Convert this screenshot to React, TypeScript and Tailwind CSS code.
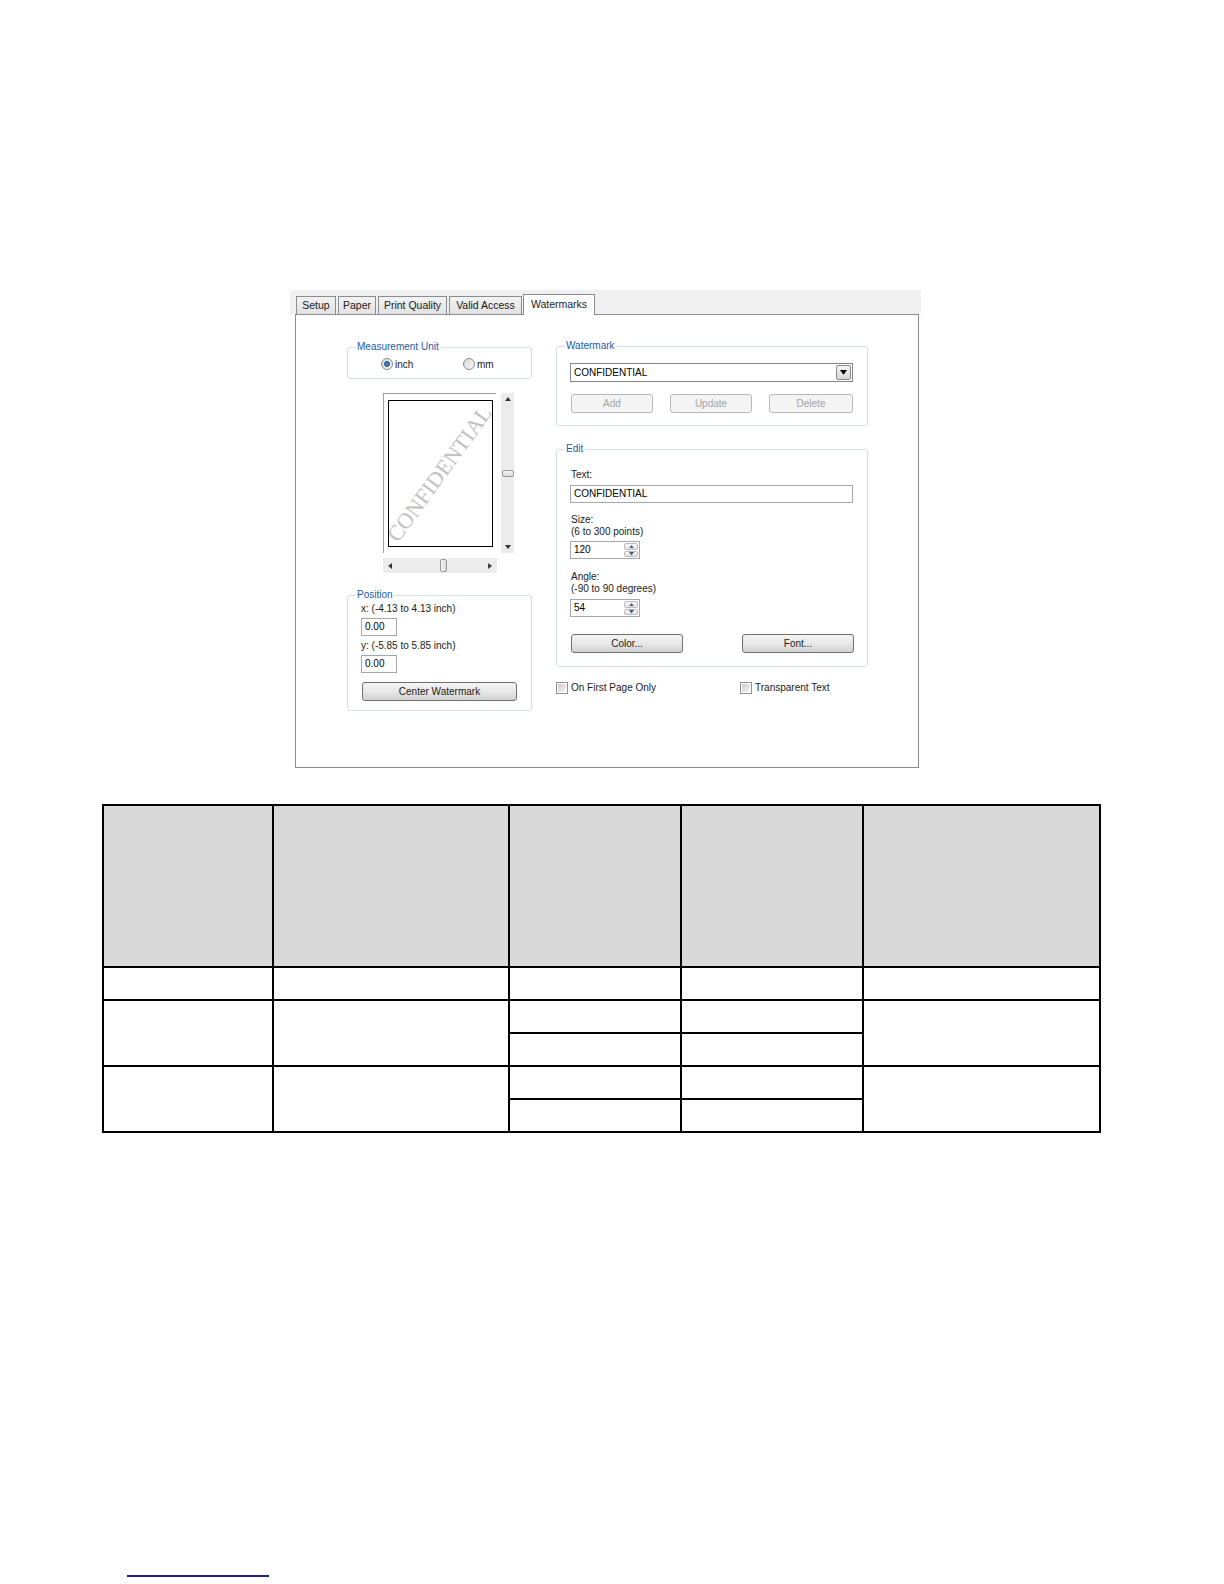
import React from "react";

const ui = "font-['Liberation_Sans',Arial,sans-serif]";

function Group({ title, className, children }: { title: string; className?: string; children?: React.ReactNode }) {
  return (
    <div className={`relative rounded-[3px] border border-[#d5dfe5] ${className ?? ""}`}>
      <span className="absolute -top-[7px] left-[7px] bg-white px-[2px] text-[10px] leading-[12px] text-[#1e5aa8]">{title}</span>
      {children}
    </div>
  );
}

function Btn({ label, disabled, className }: { label: string; disabled?: boolean; className?: string }) {
  return (
    <div
      className={`flex h-[19px] items-center justify-center rounded-[3px] border text-[10px] ${
        disabled
          ? "border-[#b5b9bc] bg-[#f4f4f4] text-[#a3a3a3]"
          : "border-[#707070] bg-linear-to-b from-[#f4f4f4] via-[#e8e8e8] to-[#d2d2d2] text-[#1a1a1a]"
      } ${className ?? ""}`}
    >
      {label}
    </div>
  );
}

function Field({ value, className }: { value: string; className?: string }) {
  return (
    <div className={`flex h-[18px] items-center border border-[#a4a8ae] bg-white pl-[3px] text-[10px] text-black ${className ?? ""}`}>
      {value}
    </div>
  );
}

function Tri({ dir, size = 5, color = "#222" }: { dir: "up" | "down" | "left" | "right"; size?: number; color?: string }) {
  const pts = {
    up: "0,4 3,0 6,4",
    down: "0,0 6,0 3,4",
    left: "4,0 4,6 0,3",
    right: "0,0 0,6 4,3",
  }[dir];
  const vb = dir === "up" || dir === "down" ? "0 0 6 4" : "0 0 4 6";
  const w = dir === "up" || dir === "down" ? size : size * 0.7;
  const h = dir === "up" || dir === "down" ? size * 0.7 : size;
  return (
    <svg width={w} height={h} viewBox={vb}>
      <polygon points={pts} fill={color} />
    </svg>
  );
}

function Spin({ value }: { value: string }) {
  return (
    <div className="flex h-[18px] w-[70px] border border-[#a4a8ae] bg-white">
      <div className="flex-1 pl-[3px] text-[10px] leading-[16px] text-black">{value}</div>
      <div className="flex w-[16px] flex-col gap-px p-px">
        <div className="flex flex-1 items-center justify-center rounded-[2px] border border-[#bcbcbc] bg-linear-to-b from-[#f7f7f7] to-[#e2e2e2]">
          <Tri dir="up" size={5} color="#4a5a70" />
        </div>
        <div className="flex flex-1 items-center justify-center rounded-[2px] border border-[#bcbcbc] bg-linear-to-b from-[#f7f7f7] to-[#e2e2e2]">
          <Tri dir="down" size={5} color="#4a5a70" />
        </div>
      </div>
    </div>
  );
}

function Radio({ checked }: { checked?: boolean }) {
  return (
    <span className="flex h-[12px] w-[12px] items-center justify-center rounded-full border border-[#8a8a8a] bg-linear-to-br from-[#d8d8d8] to-[#fbfbfb]">
      {checked && <span className="h-[6px] w-[6px] rounded-full border border-[#1c4a6e] bg-[#3f86c0]" />}
    </span>
  );
}

function Check() {
  return (
    <span className="flex h-[12px] w-[12px] items-center justify-center border border-[#8f8f8f] bg-white">
      <span className="h-[8px] w-[8px] bg-linear-to-br from-[#cfcfcf] to-[#f4f4f4]" />
    </span>
  );
}

const tabs = [
  { label: "Setup", w: "w-[40px]" },
  { label: "Paper", w: "w-[38px]" },
  { label: "Print Quality", w: "w-[69px]" },
  { label: "Valid Access", w: "w-[73px]" },
];

function Dialog() {
  return (
    <div className={`ml-[290px] mt-[290px] w-[631px] ${ui}`}>
      <div className="flex h-[24px] items-end gap-[2px] bg-[#f0f0f0] pl-[6px]">
        {tabs.map((t) => (
          <div
            key={t.label}
            className={`flex h-[18px] items-center justify-center border border-b-0 border-[#898c95] bg-linear-to-b from-[#f3f3f3] to-[#e2e2e2] text-[10.5px] text-[#1a1a1a] ${t.w}`}
          >
            {t.label}
          </div>
        ))}
        <div className="relative z-10 -mb-px -ml-px flex h-[21px] w-[72px] items-start justify-center border border-b-0 border-[#898c95] bg-white pt-[2px] text-[10.5px] text-[#1a1a1a]">
          Watermarks
        </div>
      </div>
      <div className="ml-[5px] flex h-[454px] w-[624px] gap-[24px] border border-[#898c95] bg-white pl-[51px] pt-[31px]">
        {/* left column */}
        <div className="mt-px flex w-[185px] flex-col">
          <Group title="Measurement Unit" className="h-[32px]">
            <div className="flex h-full items-center pl-[33px] pt-[2px] text-[10px] text-[#1a1a1a]">
              <div className="flex w-[82px] items-center gap-[2px]">
                <Radio checked />
                <span>inch</span>
              </div>
              <div className="flex items-center gap-[2px]">
                <Radio />
                <span>mm</span>
              </div>
            </div>
          </Group>

          <div className="ml-[36px] mt-[14px] flex flex-col">
            <div className="flex gap-[5px]">
              <div className="relative h-[160px] w-[113px] overflow-hidden border-l border-t border-[#a0a0a0] bg-white">
                <div className="ml-[4px] mt-[6px] h-[147px] w-[105px] border-[1.5px] border-black" />
                <div className="absolute inset-0 flex items-center justify-center">
                  <span className="-rotate-[54deg] whitespace-nowrap font-['Liberation_Serif',serif] text-[22px] leading-none text-[#c2c2c2]">
                    CONFIDENTIAL
                  </span>
                </div>
              </div>
              <div className="flex h-[160px] w-[13px] flex-col items-center justify-between bg-[#ececec] py-[4px]">
                <Tri dir="up" size={6} color="#333" />
                <div className="h-[7px] w-[12px] rounded-[2px] border border-[#9a9a9a] bg-linear-to-b from-[#f6f6f6] to-[#dcdcdc]" />
                <Tri dir="down" size={6} color="#333" />
              </div>
            </div>
            <div className="mt-[5px] flex h-[15px] w-[114px] items-center bg-[#ececec] px-[5px]">
              <Tri dir="left" size={6} color="#333" />
              <div className="flex flex-1 justify-center pl-[6px]">
                <div className="h-[13px] w-[7px] rounded-[2px] border border-[#9a9a9a] bg-linear-to-r from-[#f6f6f6] to-[#dcdcdc]" />
              </div>
              <Tri dir="right" size={6} color="#333" />
            </div>
          </div>

          <Group title="Position" className="mt-[22px] h-[116px]">
            <div className="flex flex-col pl-[13px] pt-[7px] text-[10px] leading-[12px] text-[#1a1a1a]">
              <span>x: (-4.13 to 4.13 inch)</span>
              <Field value="0.00" className="mt-[3px] w-[36px]" />
              <span className="mt-[4px]">y: (-5.85 to 5.85 inch)</span>
              <Field value="0.00" className="mt-[3px] w-[36px]" />
              <Btn label="Center Watermark" className="ml-px mt-[9px] w-[155px]" />
            </div>
          </Group>
        </div>

        {/* right column */}
        <div className="flex w-[312px] flex-col">
          <Group title="Watermark" className="h-[80px]">
            <div className="flex flex-col pl-[13px] pt-[16px]">
              <div className="flex h-[19px] w-[283px] items-center justify-between border border-[#7f848b] bg-white pl-[3px] pr-px text-[10px] text-black">
                <span>CONFIDENTIAL</span>
                <div className="flex h-[15px] w-[15px] items-center justify-center rounded-[2px] border border-[#8a8a8a] bg-linear-to-b from-[#f4f4f4] to-[#d6d6d6]">
                  <Tri dir="down" size={7} color="#000" />
                </div>
              </div>
              <div className="ml-px mt-[12px] flex gap-[17px]">
                <Btn label="Add" disabled className="w-[82px]" />
                <Btn label="Update" disabled className="w-[82px]" />
                <Btn label="Delete" disabled className="w-[84px]" />
              </div>
            </div>
          </Group>

          <Group title="Edit" className="mt-[23px] h-[218px]">
            <div className="flex flex-col pl-[13px] pt-[19px] text-[10px] leading-[12px] text-[#1a1a1a]">
              <span className="pl-px">Text:</span>
              <Field value="CONFIDENTIAL" className="mt-[4px] w-[283px]" />
              <span className="mt-[11px] pl-px">Size:</span>
              <span className="pl-px">(6 to 300 points)</span>
              <div className="mt-[3px]">
                <Spin value="120" />
              </div>
              <span className="mt-[12px] pl-px">Angle:</span>
              <span className="pl-px">(-90 to 90 degrees)</span>
              <div className="mt-[4px]">
                <Spin value="54" />
              </div>
              <div className="ml-px mt-[17px] flex w-[283px] justify-between">
                <Btn label="Color..." className="w-[112px]" />
                <Btn label="Font..." className="w-[112px]" />
              </div>
            </div>
          </Group>

          <div className="mt-[13px] flex items-center text-[10px] text-[#1a1a1a]">
            <div className="flex w-[184px] items-center gap-[3px]">
              <Check />
              <span>On First Page Only</span>
            </div>
            <div className="flex items-center gap-[3px]">
              <Check />
              <span>Transparent Text</span>
            </div>
          </div>
        </div>
      </div>
    </div>
  );
}

function EmptyTable() {
  const cell = "border-2 border-black";
  return (
    <table className="ml-[102px] mt-[36px] w-[997px] table-fixed border-collapse">
      <colgroup>
        <col className="w-[170px]" />
        <col className="w-[236px]" />
        <col className="w-[172px]" />
        <col className="w-[182px]" />
        <col className="w-[237px]" />
      </colgroup>
      <tbody>
        <tr className="h-[162px] bg-[#d9d9d9]">
          <td className={cell} />
          <td className={cell} />
          <td className={cell} />
          <td className={cell} />
          <td className={cell} />
        </tr>
        <tr className="h-[33px]">
          <td className={cell} />
          <td className={cell} />
          <td className={cell} />
          <td className={cell} />
          <td className={cell} />
        </tr>
        <tr className="h-[33px]">
          <td className={cell} rowSpan={2} />
          <td className={cell} rowSpan={2} />
          <td className={cell} />
          <td className={cell} />
          <td className={cell} rowSpan={2} />
        </tr>
        <tr className="h-[33px]">
          <td className={cell} />
          <td className={cell} />
        </tr>
        <tr className="h-[33px]">
          <td className={cell} rowSpan={2} />
          <td className={cell} rowSpan={2} />
          <td className={cell} />
          <td className={cell} />
          <td className={cell} rowSpan={2} />
        </tr>
        <tr className="h-[33px]">
          <td className={cell} />
          <td className={cell} />
        </tr>
      </tbody>
    </table>
  );
}

export default function App() {
  return (
    <div className="flex h-[1584px] w-[1224px] flex-col overflow-hidden bg-white">
      <Dialog />
      <EmptyTable />
      <div className="ml-[127px] mt-[442px] h-[2px] w-[142px] bg-[#20208c]" />
    </div>
  );
}
